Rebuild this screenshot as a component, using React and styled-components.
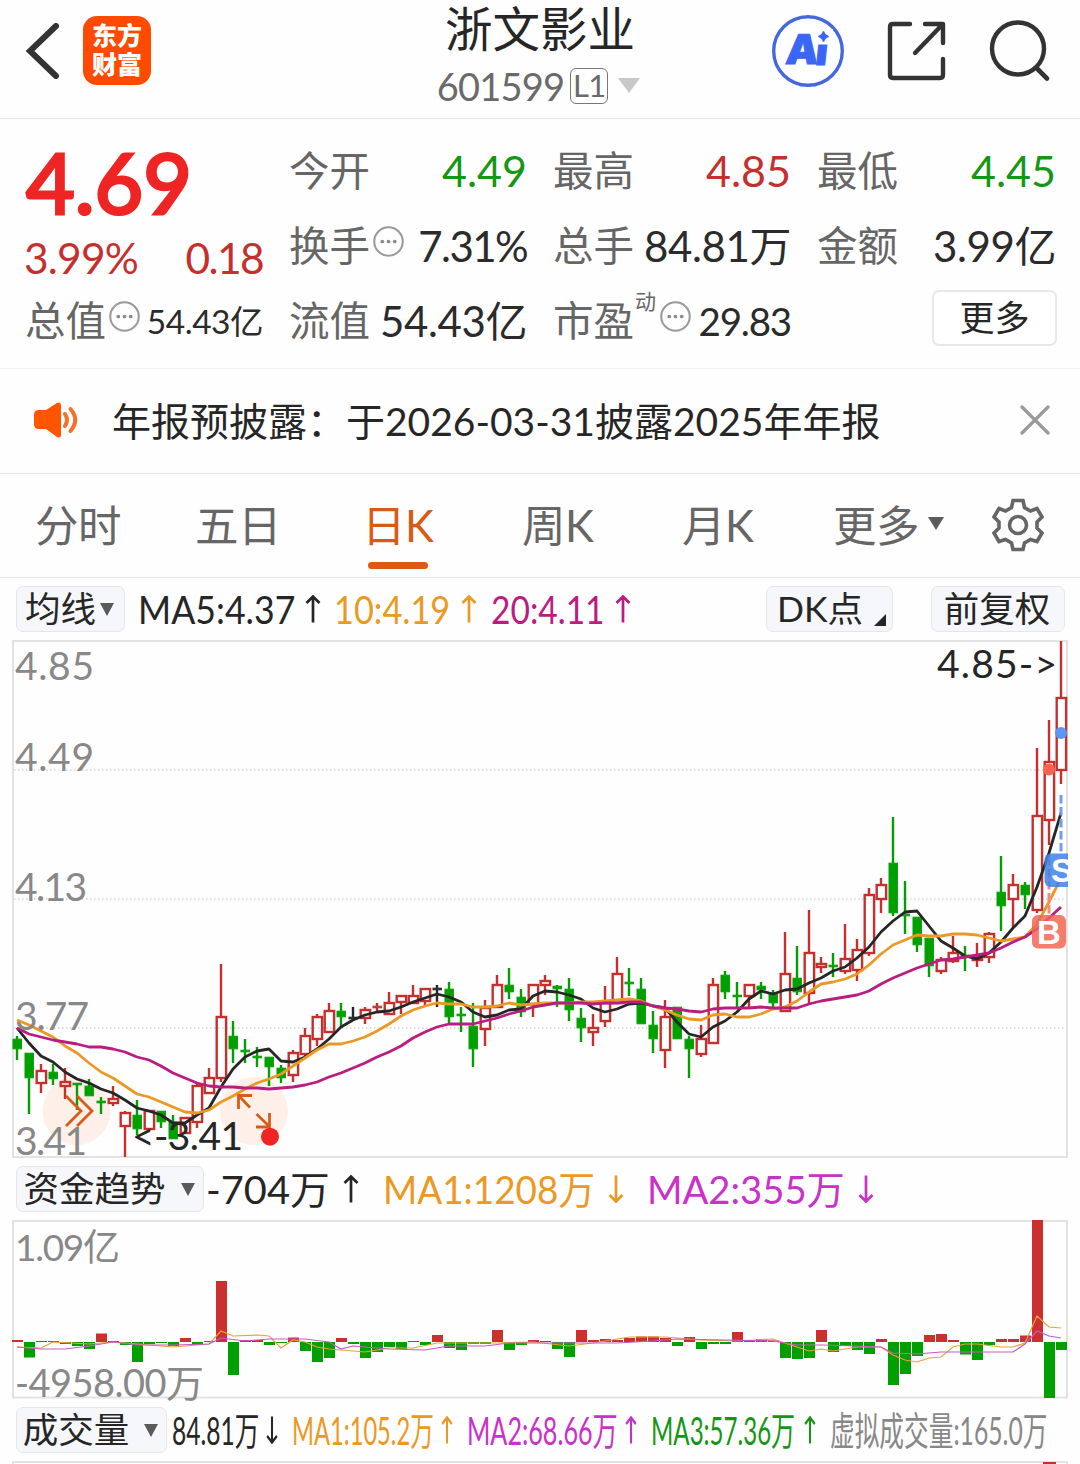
import React from "react";
import styled, { createGlobalStyle } from "styled-components";

const RED = "#c5302f";
const GREEN = "#00a000";
const ORANGE = "#ea9a24";
const MAGENTA = "#bb1c80";
const PURPLE = "#c832c8";
const INK = "#262626";

// [color, high, bodyTop, bodyBottom, low]   r: up, g: down, k: flat
const candles = [
  ["g", 1036, 1039, 1049, 1060], ["g", 1053, 1053, 1078, 1114], ["r", 1064, 1071, 1083, 1093],
  ["g", 1064, 1072, 1079, 1085], ["r", 1068, 1082, 1086, 1099], ["g", 1083, 1083, 1085, 1110],
  ["g", 1079, 1086, 1096, 1096], ["g", 1097, 1101, 1103, 1114], ["r", 1086, 1099, 1103, 1106],
  ["r", 1111, 1113, 1126, 1157], ["g", 1100, 1115, 1129, 1135], ["r", 1111, 1111, 1129, 1129],
  ["g", 1111, 1111, 1122, 1128], ["g", 1115, 1122, 1139, 1139], ["r", 1118, 1118, 1133, 1133],
  ["r", 1083, 1086, 1122, 1128], ["r", 1068, 1078, 1093, 1093], ["r", 964, 1017, 1078, 1082],
  ["g", 1021, 1036, 1049, 1063], ["g", 1039, 1050, 1052, 1063], ["g", 1047, 1056, 1058, 1067],
  ["g", 1057, 1057, 1067, 1086], ["g", 1065, 1068, 1078, 1083], ["r", 1050, 1053, 1075, 1082],
  ["r", 1028, 1036, 1054, 1057], ["r", 1014, 1017, 1039, 1046], ["r", 1003, 1011, 1032, 1032],
  ["g", 1003, 1011, 1017, 1027], ["k", 1007, 1017, 1019, 1018], ["r", 1007, 1010, 1018, 1024],
  ["r", 1003, 1006, 1008, 1013], ["r", 992, 1003, 1014, 1014], ["r", 996, 996, 1002, 1014],
  ["r", 985, 996, 1003, 1003], ["r", 989, 989, 1001, 1005], ["k", 985, 988, 990, 1007],
  ["g", 982, 989, 1017, 1023], ["g", 1007, 1014, 1016, 1032], ["g", 1003, 1026, 1049, 1067],
  ["r", 1000, 1008, 1029, 1046], ["r", 975, 985, 1007, 1007], ["g", 968, 985, 992, 999],
  ["g", 989, 997, 1012, 1017], ["r", 985, 985, 1004, 1017], ["r", 975, 981, 985, 995],
  ["g", 985, 986, 989, 1007], ["g", 978, 989, 1010, 1021], ["g", 1008, 1018, 1028, 1042],
  ["r", 1014, 1028, 1032, 1046], ["r", 986, 1003, 1021, 1027], ["r", 957, 974, 1003, 1003],
  ["g", 968, 982, 984, 996], ["g", 978, 989, 1024, 1024], ["g", 1011, 1025, 1039, 1053],
  ["r", 1000, 1017, 1050, 1068], ["g", 1007, 1007, 1039, 1039], ["g", 1036, 1039, 1049, 1078],
  ["r", 1025, 1039, 1054, 1057], ["r", 978, 985, 1043, 1043], ["g", 971, 975, 992, 999],
  ["g", 982, 995, 997, 1007], ["r", 985, 985, 996, 1007], ["g", 982, 986, 990, 999],
  ["g", 990, 993, 1003, 1007], ["r", 932, 974, 1011, 1011], ["g", 946, 978, 992, 995],
  ["r", 910, 953, 993, 1003], ["r", 957, 964, 967, 973], ["g", 953, 965, 967, 977],
  ["r", 924, 959, 971, 974], ["r", 939, 950, 970, 981], ["r", 888, 895, 953, 956],
  ["r", 878, 885, 899, 913], ["g", 817, 863, 913, 916], ["g", 881, 914, 916, 934],
  ["g", 917, 917, 945, 952], ["g", 938, 938, 966, 977], ["r", 957, 960, 971, 974],
  ["r", 936, 953, 961, 963], ["g", 946, 955, 957, 971], ["r", 943, 957, 960, 967],
  ["r", 932, 934, 957, 963], ["g", 856, 892, 906, 931], ["r", 874, 885, 899, 927],
  ["g", 882, 885, 895, 909], ["r", 748, 816, 910, 913], ["r", 720, 762, 820, 845],
  ["r", 641, 698, 770, 784],
];

const ma5 = [
  1028, 1043, 1056, 1062, 1072, 1079, 1083, 1089, 1093, 1100, 1108, 1111, 1115, 1123, 1123, 1115,
  1108, 1087, 1069, 1057, 1051, 1049, 1061, 1062, 1057, 1049, 1039, 1027, 1020, 1015, 1012, 1011,
  1007, 1002, 998, 994, 997, 1002, 1012, 1017, 1015, 1010, 1009, 996, 991, 992, 995, 999, 1008,
  1012, 1009, 1004, 1003, 1006, 1008, 1022, 1034, 1037, 1027, 1021, 1012, 999, 991, 994, 990, 989,
  983, 978, 971, 967, 958, 947, 932, 921, 912, 911, 926, 941, 948, 956, 959, 953, 942, 928, 916,
  887, 853, 813,
];
const ma10 = [
  1020, 1025, 1031, 1037, 1046, 1053, 1063, 1072, 1078, 1086, 1094, 1097, 1102, 1107, 1112, 1113,
  1110, 1102, 1096, 1089, 1083, 1079, 1074, 1066, 1058, 1050, 1044, 1044, 1041, 1037, 1031, 1024,
  1016, 1010, 1006, 1003, 1004, 1004, 1007, 1007, 1006, 1003, 1005, 1004, 1003, 1003, 1003, 1002,
  1002, 1001, 1000, 999, 1001, 1006, 1010, 1015, 1019, 1020, 1015, 1014, 1017, 1017, 1014, 1009,
  1007, 1001, 992, 984, 982, 979, 974, 965, 954, 945, 940, 935, 936, 936, 934, 934, 935, 938, 941,
  939, 937, 924, 902, 878,
];
const ma20 = [
  1028, 1034, 1037, 1040, 1042, 1044, 1047, 1047, 1049, 1052, 1057, 1060, 1066, 1073, 1078, 1083,
  1086, 1087, 1087, 1088, 1088, 1089, 1088, 1087, 1085, 1082, 1077, 1073, 1068, 1063, 1057, 1052,
  1046, 1038, 1032, 1027, 1024, 1024, 1024, 1021, 1018, 1014, 1011, 1007, 1005, 1003, 1003, 1003,
  1004, 1003, 1003, 1002, 1002, 1006, 1008, 1009, 1011, 1012, 1009, 1008, 1008, 1008, 1007, 1008,
  1008, 1008, 1004, 1001, 999, 997, 995, 991, 984, 978, 973, 968, 964, 960, 959, 957, 955, 953,
  948, 942, 937, 929, 918, 907,
];

// money flow, in px above (+) or below (-) the zero line
const flow = [
  2, -15.5, 1, 1, -2, -4, -7, 8.5, 1, -3, -20, -2, -1, -4, 4, -3, 1, 61, -33, 2, 2, -3, -1, 4.5, -9,
  -20, -16, 4, -2, -16, -10, -5, -7, 1, -3, 7, -6, -8, -2, -2, 12, -8, -3, 2, 1, -7, -15, 12, 2, 3,
  2, 4, 5.5, 5.5, 4, -4, 5, -7, -2, -2, 10, 1, 3, 1.5, -16, -17, -16, 12, -10, -4, -8, -12, 3, -43,
  -32, -14, 7, 8, 2, -12.5, -18, -3, 3, 3, 6.5, 122, -56, -8,
];
// [index, y]
const flowMa1 = [
  [0, 1347], [2, 1348], [3, 1342], [6, 1344], [8, 1342], [10, 1344], [13, 1347], [16, 1344],
  [17, 1331], [18, 1336], [20, 1335], [21, 1336], [22, 1348], [23, 1340], [24, 1342], [25, 1347],
  [26, 1349], [29, 1352], [31, 1348], [33, 1348], [35, 1343], [40, 1343], [43, 1342], [46, 1346],
  [48, 1343], [51, 1337], [54, 1337], [57, 1340], [60, 1341], [63, 1339], [65, 1347], [66, 1351],
  [67, 1349], [68, 1351], [70, 1347], [72, 1347], [73, 1355], [74, 1360], [75, 1362], [76, 1358],
  [77, 1357], [78, 1347], [79, 1344], [80, 1344], [82, 1347], [83, 1347], [84, 1343], [85, 1316],
  [86, 1327], [87, 1328],
];
const flowMa2 = [
  [0, 1347], [2, 1349], [4, 1349], [6, 1346], [8, 1342], [10, 1345], [13, 1345], [16, 1344],
  [17, 1338], [19, 1341], [21, 1339], [24, 1339], [26, 1342], [27, 1349], [28, 1346], [31, 1349],
  [34, 1350], [36, 1346], [39, 1346], [41, 1343], [50, 1343], [53, 1341], [55, 1339], [59, 1340],
  [63, 1341], [65, 1345], [67, 1345], [70, 1346], [72, 1347], [73, 1353], [75, 1354], [77, 1352],
  [83, 1352], [84, 1344], [85, 1331], [86, 1336], [87, 1338],
];

const cx = (i) => 17 + i * 12;
const toPoints = (list) => list.map((y, i) => `${cx(i)},${y}`).join(" ");
const toPairs = (list) => list.map(([i, y]) => `${cx(i)},${y}`).join(" ");

const Dots = () => (
  <DotsIcon viewBox="0 0 30 30">
    <circle cx="15" cy="15" r="13.8" fill="none" stroke="#9a9a9a" strokeWidth="2" />
    <circle cx="9" cy="15" r="1.8" fill="#8a8a8a" />
    <circle cx="15" cy="15" r="1.8" fill="#8a8a8a" />
    <circle cx="21" cy="15" r="1.8" fill="#8a8a8a" />
  </DotsIcon>
);

const Arrow = ({ down, color, left }) => (
  <ArrowIcon viewBox="0 0 16 28" $left={left}>
    <path
      d={down ? "M8 0.500V26.500M1.500 20L8 26.500L14.500 20" : "M8 27.500V1.500M1.500 8L8 1.500L14.500 8"}
      fill="none"
      stroke={color}
      strokeWidth="2.7"
    />
  </ArrowIcon>
);

const Header = () => (
  <TopBar>
    <TopLeft>
      <svg width="34" height="56" viewBox="0 0 34 56">
        <path d="M31 3L5 28L31 53" fill="none" stroke="#333" strokeWidth="6" strokeLinecap="round" />
      </svg>
      <Brand>
        <span>东方</span>
        <span>财富</span>
      </Brand>
    </TopLeft>
    <TopCenter>
      <StockName>浙文影业</StockName>
      <StockCode>
        601599
        <Level>L1</Level>
        <svg width="22" height="16" viewBox="0 0 22 16">
          <path d="M0 0H22L11 15Z" fill="#c8c8c8" />
        </svg>
      </StockCode>
    </TopCenter>
    <TopRight>
      <svg width="72" height="74" viewBox="0 0 72 74">
        <circle cx="36" cy="37" r="34.3" fill="#fff" stroke="#4569dd" strokeWidth="3.4" />
        <g transform="translate(5 0) skewX(-6)">
          <AiText x="13" y="50.500">
            A
          </AiText>
          <AiText x="43" y="51.500">
            i
          </AiText>
        </g>
        <rect x="42" y="15" width="19" height="15.500" fill="#fff" />
        <path
          d="M51.500 17.500Q52.500 21.500 56.500 22.500Q52.500 23.500 51.500 27.500Q50.500 23.500 46.500 22.500Q50.500 21.500 51.500 17.500Z"
          fill="#3b66f5"
          stroke="#3b66f5"
          strokeWidth="1.5"
        />
      </svg>
      <svg width="60" height="60" viewBox="0 0 60 60">
        <path
          d="M23 3H6Q3 3 3 6V54Q3 57 6 57H53Q56 57 56 54V38M38 3H56V22M54 5L28 32"
          fill="none"
          stroke="#333"
          strokeWidth="4.400"
          strokeLinecap="round"
          strokeLinejoin="round"
        />
      </svg>
      <svg width="62" height="64" viewBox="0 0 62 64">
        <circle cx="29" cy="29.500" r="26" fill="none" stroke="#333" strokeWidth="4.400" />
        <path d="M47.500 49L58 59.500" stroke="#333" strokeWidth="4.600" strokeLinecap="round" />
      </svg>
    </TopRight>
  </TopBar>
);

const Quote = () => (
  <QuoteGrid>
    <PriceBlock>
      <Price>4.69</Price>
      <Change>
        <span>3.99%</span>
        <span>0.18</span>
      </Change>
    </PriceBlock>
    <Cell>
      <Key>今开</Key>
      <Value $color="#159615">4.49</Value>
    </Cell>
    <Cell>
      <Key>最高</Key>
      <Value $color={RED}>4.85</Value>
    </Cell>
    <Cell>
      <Key>最低</Key>
      <Value $color="#159615">4.45</Value>
    </Cell>
    <Cell>
      <Key>换手</Key>
      <Dots />
      <Value $size={42} $ls={-1.6}>7.31%</Value>
    </Cell>
    <Cell>
      <Key>总手</Key>
      <Value $size={42} $ls={-0.4}>84.81万</Value>
    </Cell>
    <Cell>
      <Key>金额</Key>
      <Value $size={42} $ls={-0.4}>3.99亿</Value>
    </Cell>
    <Cell>
      <Key>总值</Key>
      <Dots />
      <Value $size={33.5} $ls={-0.5}>54.43亿</Value>
    </Cell>
    <Cell>
      <Key>流值</Key>
      <Value $size={42} $ls={-0.4}>54.43亿</Value>
    </Cell>
    <Cell>
      <Key>市盈</Key>
      <Sup>动</Sup>
      <Dots />
      <Value $size={38.5} $ls={-1.2}>29.83</Value>
    </Cell>
    <Cell>
      <MoreButton>更多</MoreButton>
    </Cell>
  </QuoteGrid>
);

const Notice = () => (
  <NoticeBar>
    <svg width="46" height="38" viewBox="0 0 46 38">
      <path
        d="M6 9H13L24 2Q28 0 28 5V33Q28 38 24 36L13 28H6Q1 28 1 23V14Q1 9 6 9Z"
        fill="#ff5400"
      />
      <path d="M32 13Q36 19 32 25M37.500 8Q47 19 37.500 30" fill="none" stroke="#f5702a" strokeWidth="4" strokeLinecap="round" />
    </svg>
    <NoticeText>年报预披露：于2026-03-31披露2025年年报</NoticeText>
    <svg width="30" height="30" viewBox="0 0 30 30">
      <path d="M2 2L28 28M28 2L2 28" stroke="#999" strokeWidth="3.200" strokeLinecap="round" />
    </svg>
  </NoticeBar>
);

const Tabs = () => (
  <TabBar>
    <Tab $w={160}>分时</Tab>
    <Tab $w={169}>五日</Tab>
    <Tab $w={158} $active>
      日K
    </Tab>
    <Tab $w={160}>周K</Tab>
    <Tab $w={151}>月K</Tab>
    <Tab $w={159}>
      更多
      <svg width="16" height="14" viewBox="0 0 16 14">
        <path d="M0 0H16L8 13Z" fill="#5c5c5c" />
      </svg>
    </Tab>
    <svg width="52" height="54" viewBox="0 0 52 54">
      <path
        d="M21 2.500H31L32.500 9.500L38.500 13L45 10.500L50 19L45 24V30L50 35L45 43.500L38.500 41.500L32.500 45L31 51.500H21L19.500 45L13.500 41.500L7 43.500L2 35L7 30V24L2 19L7 10.500L13.500 13L19.500 9.500Z"
        fill="none"
        stroke="#666"
        strokeWidth="3.600"
      />
      <circle cx="26" cy="27" r="8.500" fill="none" stroke="#666" strokeWidth="3.600" />
    </svg>
  </TabBar>
);

const KChart = () => (
  <ChartSvg width="1080" height="518" viewBox="0 640 1080 518">
    <rect x="13" y="641" width="1054" height="516" fill="none" stroke="#e2e2e2" strokeWidth="2" />
    {[770, 899, 1028].map((y) => (
      <line key={y} x1="14" x2="1066" y1={y} y2={y} stroke="#d4d4d4" strokeWidth="1.5" strokeDasharray="1.5 2.5" />
    ))}
    <circle cx="76.500" cy="1111" r="34" fill="#fef0e9" />
    <circle cx="254" cy="1111" r="34" fill="#fef0e9" />

    {candles.map(([c, high, top, bottom, low], i) => {
      const color = c === "r" ? RED : c === "g" ? GREEN : INK;
      const hollow = c === "r" && bottom - top > 2;
      return (
        <g key={i} stroke={color} strokeWidth="2.4">
          {high < top && <line x1={cx(i)} x2={cx(i)} y1={high} y2={top} />}
          {low > bottom && <line x1={cx(i)} x2={cx(i)} y1={bottom} y2={low} />}
          {hollow ? (
            <rect x={cx(i) - 4.3} y={top} width="9.400" height={bottom - top} fill="none" />
          ) : (
            <rect x={cx(i) - 4} y={top + 0.2} width="8.400" height={bottom - top - 0.4} fill={color} strokeWidth="1" />
          )}
        </g>
      );
    })}

    <Line points={toPoints(ma5)} stroke={INK} />
    <Line points={toPoints(ma10)} stroke={ORANGE} />
    <Line points={toPoints(ma20)} stroke={MAGENTA} />

    <g fill="#888">
      <AxisText x="15" y="680" textLength="79">4.85</AxisText>
      <AxisText x="15" y="771" textLength="79">4.49</AxisText>
      <AxisText x="15" y="901" textLength="72">4.13</AxisText>
      <AxisText x="15" y="1030" textLength="74">3.77</AxisText>
      <AxisText x="15" y="1155" textLength="72">3.41</AxisText>
    </g>
    <g fill={INK}>
      <AxisText x="937" y="678" textLength="120">4.85-&gt;</AxisText>
      <AxisText x="132" y="1150" textLength="111">&lt;-3.41</AxisText>
    </g>

    <g fill="none" stroke="#dc5a17" strokeWidth="2.8">
      <path d="M66 1096L81 1111L66 1126M77 1096L92 1111L77 1126" />
      <path d="M252 1095.500H238.500V1109M238.500 1095.500L250 1107.500" />
      <path d="M256.500 1114L269.500 1126.500M269.500 1113V1127H256" />
    </g>
    <circle cx="270" cy="1136.700" r="9" fill="#f02420" />

    <circle cx="1049" cy="769.500" r="6" fill="#fa6450" />
    <circle cx="1061" cy="733" r="6" fill="#5a96f5" />
    <g strokeWidth="3" strokeDasharray="8.5 3.5">
      <line x1="1061" x2="1061" y1="795" y2="853" stroke="#6ea0e6" />
      <line x1="1049" x2="1049" y1="857" y2="915" stroke="#f08c82" />
    </g>
    <svg x="1040" y="640" width="28" height="518" viewBox="1040 640 28 518">
      <rect x="1044.500" y="853.500" width="34" height="33.500" rx="6" fill="#3c82e6" fillOpacity="0.85" />
      <MarkText x="1062" y="882">S</MarkText>
    </svg>
    <rect x="1032" y="915" width="34" height="33.500" rx="6" fill="#f26655" fillOpacity="0.85" />
    <MarkText x="1049" y="943.500">B</MarkText>
  </ChartSvg>
);

const FlowChart = () => (
  <ChartSvg width="1080" height="179" viewBox="0 1220 1080 179">
    <rect x="13" y="1221" width="1054" height="176.500" fill="none" stroke="#e2e2e2" strokeWidth="2" />
    <g fill="#888">
      <AxisText x="15" y="1261" textLength="105" $size={37}>1.09亿</AxisText>
      <AxisText x="15" y="1397" textLength="189" $size={38}>-4958.00万</AxisText>
    </g>
    {flow.map((v, i) => (
      <rect
        key={i}
        x={cx(i) - 5}
        y={v > 0 ? 1342 - v : 1342}
        width="11"
        height={Math.abs(v)}
        fill={v > 0 ? "#cc302e" : GREEN}
      />
    ))}
    <polyline points={toPairs(flowMa1)} fill="none" stroke="#e8a13c" strokeWidth="1.200" />
    <polyline points={toPairs(flowMa2)} fill="none" stroke="#c85ac8" strokeWidth="1.200" />
  </ChartSvg>
);

const App = () => {
  return (
    <Page>
      <GlobalStyle />
      <Header />
      <Quote />
      <Notice />
      <Tabs />

      <IndicatorRow $h={62}>
        <Chip $w={109} $gap={4}>
          均线
          <Caret viewBox="0 0 14 13">
            <path d="M0 0H14L7 13Z" />
          </Caret>
        </Chip>
        <Slot $left={13} $w={157}>
          <Squeeze $sx={0.915}>MA5:4.37</Squeeze>
        </Slot>
        <Arrow color={INK} left={10} />
        <Slot $left={13} $w={115} $color={ORANGE}>
          <Squeeze $sx={0.88}>10:4.19</Squeeze>
        </Slot>
        <Arrow color={ORANGE} left={12} />
        <Slot $left={14} $w={115} $color={MAGENTA}>
          <Squeeze $sx={0.86}>20:4.11</Squeeze>
        </Slot>
        <Arrow color={MAGENTA} left={9} />
        <Chip $w={127} $push $gap={11}>
          DK点
          <Corner viewBox="0 0 12 12">
            <path d="M12 0V12H0Z" />
          </Corner>
        </Chip>
        <Chip $w={134} $left={38}>
          前复权
        </Chip>
      </IndicatorRow>
      <KChart />

      <IndicatorRow $h={62}>
        <Chip $w={188} $gap={15}>
          资金趋势
          <Caret viewBox="0 0 14 13">
            <path d="M0 0H14L7 13Z" />
          </Caret>
        </Chip>
        <Slot $left={2} $w={123}>
          <Squeeze $sx={1.02}>-704万</Squeeze>
        </Slot>
        <Arrow color={INK} left={14} />
        <Slot $left={24} $w={212} $color={ORANGE}>
          <Squeeze $sx={0.945}>MA1:1208万</Squeeze>
        </Slot>
        <Arrow down color={ORANGE} left={13} />
        <Slot $left={23} $w={197} $color={PURPLE}>
          <Squeeze $sx={0.98}>MA2:355万</Squeeze>
        </Slot>
        <Arrow down color={PURPLE} left={14} />
      </IndicatorRow>
      <FlowChart />

      <IndicatorRow $h={62}>
        <Chip $w={151} $gap={15}>
          成交量
          <Caret viewBox="0 0 14 13">
            <path d="M0 0H14L7 13Z" />
          </Caret>
        </Chip>
        <Slot $left={5} $w={87}>
          <Squeeze $sx={0.63}>84.81万</Squeeze>
        </Slot>
        <NarrowArrow>
          <Arrow down color={INK} left={5} />
        </NarrowArrow>
        <Slot $left={12} $w={142} $color={ORANGE}>
          <Squeeze $sx={0.607}>MA1:105.2万</Squeeze>
        </Slot>
        <NarrowArrow>
          <Arrow color={ORANGE} left={5} />
        </NarrowArrow>
        <Slot $left={12} $w={150} $color={PURPLE}>
          <Squeeze $sx={0.645}>MA2:68.66万</Squeeze>
        </Slot>
        <NarrowArrow>
          <Arrow color={PURPLE} left={6} />
        </NarrowArrow>
        <Slot $left={12} $w={145} $color="#169616">
          <Squeeze $sx={0.617}>MA3:57.36万</Squeeze>
        </Slot>
        <NarrowArrow>
          <Arrow color="#169616" left={6} />
        </NarrowArrow>
        <Slot $left={12} $w={218} $color="#888">
          <Squeeze $sx={0.633}>虚拟成交量:165.0万</Squeeze>
        </Slot>
      </IndicatorRow>
      <ChartSvg width="1080" height="3" viewBox="0 0 1080 3">
        <path d="M13 3V1H1067V3" fill="none" stroke="#e2e2e2" strokeWidth="2" />
        <rect x="1043" y="1" width="13" height="2" fill={RED} />
      </ChartSvg>
    </Page>
  );
};

const GlobalStyle = createGlobalStyle`
  * {
    box-sizing: border-box;
  }
  body {
    margin: 0;
    background: #fff;
    font-family: Lato, "Noto Sans CJK SC", sans-serif;
    color: ${INK};
  }
`;

const Page = styled.div`
  width: 1080px;
  height: 1464px;
  overflow: hidden;
  background: #fefefe;
`;

const TopBar = styled.header`
  height: 119px;
  display: grid;
  grid-template-columns: 360px 1fr 360px;
  border-bottom: 1.5px solid #e6e6e6;
`;

const TopLeft = styled.div`
  display: flex;
  align-items: center;
  padding: 0 0 17px 25px;
`;

const Brand = styled.div`
  width: 68px;
  height: 69px;
  margin-left: 24px;
  padding-bottom: 1px;
  border-radius: 14px;
  background: #ff4a00;
  color: #fff;
  font-size: 25px;
  font-weight: 900;
  line-height: 29px;
  display: flex;
  flex-direction: column;
  align-items: center;
  justify-content: center;
`;

const TopCenter = styled.div`
  display: flex;
  flex-direction: column;
  align-items: center;
`;

const StockName = styled.h1`
  margin: 0;
  font-size: 47.5px;
  font-weight: 400;
  line-height: 57px;
`;

const StockCode = styled.div`
  display: flex;
  align-items: center;
  height: 57px;
  margin-left: -3px;
  color: #6a6a6a;
  font-size: 38px;
  letter-spacing: -0.8px;
  svg {
    margin-left: 10px;
  }
`;

const Level = styled.span`
  width: 38px;
  height: 36px;
  margin-left: 6px;
  border: 1.5px solid #777;
  border-radius: 6px;
  font-size: 31px;
  line-height: 33px;
  text-align: center;
`;

const TopRight = styled.div`
  display: flex;
  align-items: center;
  justify-content: space-between;
  padding: 0 29px 17px 52px;
`;

const AiText = styled.text`
  font-family: Inter, sans-serif;
  font-size: 41px;
  font-weight: 900;
  fill: #3b66f5;
  stroke: #3b66f5;
  stroke-width: 1px;
`;

const QuoteGrid = styled.section`
  height: 250px;
  padding: 15px 24px 10px 26px;
  display: grid;
  grid-template-columns: 237px 237px 237px 238px;
  grid-template-rows: repeat(3, 75px);
  column-gap: 27px;
  border-bottom: 1.5px solid #f0f0f0;
`;

const PriceBlock = styled.div`
  grid-row: span 2;
  color: #ee2524;
`;

const Price = styled.div`
  margin-top: 2px;
  font-size: 84px;
  line-height: 91px;
  letter-spacing: 0;
  -webkit-text-stroke: 3.2px #ee2524;
`;

const Change = styled.div`
  display: flex;
  justify-content: space-between;
  margin: 3px 0 0 -2px;
  color: ${RED};
  font-size: 42.5px;
  line-height: 56px;
  letter-spacing: -0.8px;
  span:last-child {
    letter-spacing: -1.6px;
  }
`;

const Cell = styled.div`
  display: flex;
  align-items: center;
  white-space: nowrap;
  line-height: 44px;
`;

const Key = styled.span`
  margin: 0 1px 1px -1px;
  color: #666;
  font-size: 40.5px;
`;

const Value = styled.span`
  margin: 0 0 2px auto;
  color: ${(props) => props.$color || "#2b2b2b"};
  font-size: ${(props) => props.$size || 43}px;
  letter-spacing: ${(props) => props.$ls || 0}px;
`;

const Sup = styled.sup`
  align-self: flex-start;
  margin: -5px 2px 0 0;
  color: #666;
  font-size: 21px;
`;

const DotsIcon = styled.svg`
  flex: none;
  width: 31px;
  height: 31px;
  margin: 0 0 10px 2px;
`;

const MoreButton = styled.button`
  width: 125px;
  height: 56px;
  margin: 0 -1px 7px auto;
  padding: 0 0 3px;
  border: 2px solid #e8e8e8;
  border-radius: 7px;
  background: #fff;
  color: ${INK};
  font: inherit;
  font-size: 35px;
`;

const NoticeBar = styled.div`
  height: 105px;
  padding: 0 30px 2px 33px;
  display: flex;
  align-items: center;
  border-bottom: 1.5px solid #e6e6e6;
  svg:last-child {
    margin-left: auto;
  }
`;

const NoticeText = styled.p`
  margin: 1px 0 0 33px;
  font-size: 39px;
  line-height: 44px;
  white-space: nowrap;
`;

const TabBar = styled.nav`
  height: 104px;
  padding: 0 0 1px 35px;
  display: flex;
  align-items: center;
  border-bottom: 1.5px solid #e6e6e6;
`;

const Tab = styled.div`
  position: relative;
  width: ${(props) => props.$w}px;
  height: 100%;
  display: flex;
  align-items: center;
  color: ${(props) => (props.$active ? "#d95a14" : "#666")};
  font-size: 43.5px;
  line-height: 50px;
  letter-spacing: -0.4px;
  text-indent: ${(props) => (props.$active ? "-2px" : "0")};
  white-space: nowrap;
  svg {
    margin: 0 0 2px 9px;
  }
  &::after {
    content: "";
    display: ${(props) => (props.$active ? "block" : "none")};
    position: absolute;
    left: 4px;
    bottom: 7px;
    width: 60px;
    height: 7px;
    border-radius: 4px;
    background: #dc5a14;
  }
`;

const IndicatorRow = styled.div`
  height: ${(props) => props.$h}px;
  padding: 0 15px 0 16px;
  display: flex;
  align-items: center;
`;

const Chip = styled.div`
  flex: none;
  width: ${(props) => props.$w}px;
  height: 46px;
  margin-left: ${(props) => (props.$push ? "auto" : `${props.$left || 0}px`)};
  display: flex;
  align-items: center;
  justify-content: center;
  gap: ${(props) => props.$gap || 0}px;
  padding-right: 2px;
  border: 1.5px solid #e4e6ea;
  border-radius: 7px;
  background: #f6f7fa;
  font-size: 35.5px;
  line-height: 42px;
  white-space: nowrap;
`;

const Caret = styled.svg`
  width: 14px;
  height: 13px;
  fill: #5a5a5a;
`;

const Corner = styled.svg`
  width: 12px;
  height: 12px;
  margin: 22px -6px 0 0;
  fill: ${INK};
`;

const Slot = styled.div`
  flex: none;
  width: ${(props) => props.$w}px;
  margin: 0 0 1px ${(props) => props.$left}px;
  color: ${(props) => props.$color || INK};
  font-size: 39px;
  line-height: 44px;
  white-space: nowrap;
`;

const Squeeze = styled.span`
  display: inline-block;
  transform: scaleX(${(props) => props.$sx});
  transform-origin: left;
`;

const ArrowIcon = styled.svg`
  flex: none;
  width: 16px;
  height: 28px;
  margin-left: ${(props) => props.$left}px;
`;

const NarrowArrow = styled.span`
  flex: none;
  display: flex;
  svg {
    transform: scaleX(0.75);
  }
`;

const ChartSvg = styled.svg`
  display: block;
  overflow: visible;
`;

const Line = styled.polyline`
  fill: none;
  stroke-width: 2.8px;
  stroke-linejoin: round;
`;

const AxisText = styled.text`
  font-size: ${(props) => props.$size || 39}px;
`;

const MarkText = styled.text`
  font-family: "Liberation Sans", sans-serif;
  font-size: 33px;
  font-weight: 700;
  fill: #fff;
  text-anchor: middle;
`;

export default App;
